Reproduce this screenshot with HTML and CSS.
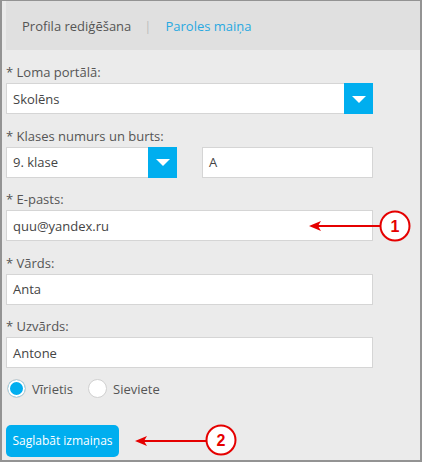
FILE: index.html
```html
<!DOCTYPE html>
<html>
<head>
<meta charset="utf-8">
<link rel="stylesheet" href="styles.css">
</head>
<body>
<div class="frame">
  <div class="tabs">
    <span class="tab active">Profila rediģēšana</span>
    <span class="sep">|</span>
    <span class="tab link">Paroles maiņa</span>
  </div>
  <form class="form">
    <div class="group">
      <div class="label">* Loma portālā:</div>
      <div class="select wide">
        <span class="value">Skolēns</span>
        <span class="drop"><span class="tri"></span></span>
      </div>
    </div>
    <div class="group">
      <div class="label">* Klases numurs un burts:</div>
      <div class="row">
        <div class="select narrow">
          <span class="value">9. klase</span>
          <span class="drop"><span class="tri"></span></span>
        </div>
        <div class="input half">A</div>
      </div>
    </div>
    <div class="group">
      <div class="label">* E-pasts:</div>
      <div class="input">quu@yandex.ru</div>
      <div class="note n1">
        <svg width="106" height="34" viewBox="0 0 106 34">
          <line x1="10" y1="17" x2="74" y2="17" stroke="#e50000" stroke-width="2"/>
          <path d="M2 17 L14 12 L11 17 L14 22 Z" fill="#e50000"/>
          <circle cx="88" cy="17" r="14.5" fill="#fff" stroke="#e50000" stroke-width="2"/>
          <text x="88" y="22.5" text-anchor="middle" class="num">1</text>
        </svg>
      </div>
    </div>
    <div class="group">
      <div class="label">* Vārds:</div>
      <div class="input">Anta</div>
    </div>
    <div class="group">
      <div class="label">* Uzvārds:</div>
      <div class="input">Antone</div>
    </div>
    <div class="radios">
      <span class="radio on"></span><span class="rlabel">Vīrietis</span>
      <span class="radio"></span><span class="rlabel">Sieviete</span>
    </div>
    <div class="actions">
      <span class="btn">Saglabāt izmaiņas</span>
      <div class="note n2">
        <svg width="106" height="34" viewBox="0 0 106 34">
          <line x1="10" y1="18" x2="74" y2="18" stroke="#e50000" stroke-width="2"/>
          <path d="M2 18 L14 13 L11 18 L14 23 Z" fill="#e50000"/>
          <circle cx="88" cy="17" r="14.5" fill="#fff" stroke="#e50000" stroke-width="2"/>
          <text x="88" y="22.5" text-anchor="middle" class="num">2</text>
        </svg>
      </div>
    </div>
  </form>
</div>
</body>
</html>
```
FILE: styles.css
```css
* { box-sizing: border-box; }
html, body { margin: 0; padding: 0; }
body {
  font-family: "Open Sans", "Liberation Sans", sans-serif;
  font-size: 13px;
  color: #555;
  background: #fff;
}
.frame {
  width: 422px;
  height: 462px;
  border: 2px solid #939393;
  border-top-width: 1px;
  background: #ebebeb;
  padding-left: 4px;
  position: relative;
}
.tabs {
  height: 49px;
  background: #e0e0e0;
  display: flex;
  align-items: center;
  padding-left: 16px;
  padding-bottom: 0;
}
.tab.active { color: #555; }
.sep { color: #bdbdbd; margin: 0 14px 0 13px; }
.tab.link { color: #29a9e1; }
.form {
  padding-top: 13px;
  width: 367px;
}
.group {
  position: relative;
  margin-bottom: 12.5px;
}
.label {
  height: 18px;
  line-height: 18px;
  margin-bottom: 2px;
}
.select, .input {
  height: 31px;
  background: #fff;
  border: 1px solid #d5d5d5;
  display: flex;
  align-items: center;
  color: #444;
}
.input { padding-left: 6px; }
.select .value { flex: 1; padding-left: 6px; }
.drop {
  width: 29px;
  align-self: stretch;
  margin: -1px -1px -1px 0;
  background: #00aeef;
  display: flex;
  align-items: center;
  justify-content: center;
}
.tri {
  width: 0; height: 0;
  border-left: 7px solid transparent;
  border-right: 7px solid transparent;
  border-top: 7px solid #fff;
  margin-top: 1px;
}
.row { display: flex; gap: 25px; }
.narrow { width: 171px; }
.half { flex: 1; }
.radios {
  display: flex;
  align-items: center;
  height: 20px;
  margin-top: -2px;
}
.radio {
  width: 19px; height: 19px;
  border-radius: 50%;
  background: #fff;
  border: 1px solid #d0d0d0;
  margin-left: 1px;
  margin-right: 6px;
}
.radio.on {
  background: #00aeef;
  box-shadow: inset 0 0 0 2px #fff;
}
.rlabel { margin-right: 14px; }
.actions {
  margin-top: 26px;
  position: relative;
}
.btn {
  display: inline-flex;
  align-items: center;
  justify-content: center;
  height: 32px;
  width: 113px;
  background: #00aeef;
  color: #fff;
  border-radius: 5px;
  font-size: 12px;
  padding-bottom: 1px;
}
.note { position: absolute; }
.n1 { left: 301px; top: 19px; }
.n2 { left: 127px; top: -2px; }
.num {
  font-family: "Liberation Sans", sans-serif;
  font-weight: bold;
  font-size: 16px;
  fill: #e50000;
}
```
